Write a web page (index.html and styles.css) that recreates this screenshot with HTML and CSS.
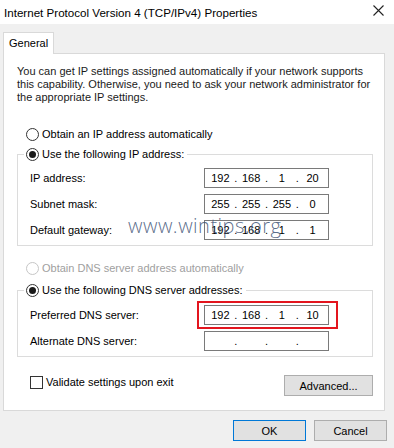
FILE: index.html
```html
<!DOCTYPE html>
<html lang="en">
<head>
    <meta charset="UTF-8">
    <title>Internet Protocol Version 4 (TCP/IPv4) Properties</title>
    <link rel="stylesheet" href="styles.css">
</head>
<body>
    <div class="window">
        <div class="titlebar">
            <span class="title">Internet Protocol Version 4 (TCP/IPv4) Properties</span>
            <svg class="close" width="11" height="11" viewBox="0 0 11 11">
                <path d="M0.5 0.5 L10.5 10.5 M10.5 0.5 L0.5 10.5" stroke="#222" stroke-width="1.1" fill="none"/>
            </svg>
        </div>

        <div class="content">
            <div class="tabs"><span class="tab">General</span></div>

            <div class="panel">
                <p class="intro">You can get IP settings assigned automatically if your network supports this capability. Otherwise, you need to ask your network administrator for the appropriate IP settings.</p>

                <div class="option first"><span class="radio"></span>Obtain an IP address automatically</div>

                <fieldset class="group">
                    <legend class="option"><span class="radio checked"></span>Use the following IP address:</legend>
                    <div class="row">
                        <span>IP address:</span>
                        <div class="ip"><span>192</span><i>.</i><span>168</span><i>.</i><span>1</span><i>.</i><span>20</span></div>
                    </div>
                    <div class="row">
                        <span>Subnet mask:</span>
                        <div class="ip"><span>255</span><i>.</i><span>255</span><i>.</i><span>255</span><i>.</i><span>0</span></div>
                    </div>
                    <div class="row">
                        <span>Default gateway:</span>
                        <div class="ip"><span>192</span><i>.</i><span>168</span><i>.</i><span>1</span><i>.</i><span>1</span></div>
                    </div>
                </fieldset>

                <div class="option disabled"><span class="radio"></span>Obtain DNS server address automatically</div>

                <fieldset class="group dns">
                    <legend class="option"><span class="radio checked"></span>Use the following DNS server addresses:</legend>
                    <div class="row">
                        <span>Preferred DNS server:</span>
                        <div class="ip marked"><span>192</span><i>.</i><span>168</span><i>.</i><span>1</span><i>.</i><span>10</span></div>
                    </div>
                    <div class="row">
                        <span>Alternate DNS server:</span>
                        <div class="ip"><span></span><i>.</i><span></span><i>.</i><span></span><i>.</i><span></span></div>
                    </div>
                </fieldset>

                <div class="panel-footer">
                    <div class="option"><span class="checkbox"></span>Validate settings upon exit</div>
                    <button class="btn advanced">Advanced...</button>
                </div>
            </div>

            <div class="actions">
                <button class="btn primary">OK</button>
                <button class="btn">Cancel</button>
            </div>
        </div>

        <div class="watermark">www.wintips.org</div>
    </div>
</body>
</html>
```

FILE: styles.css
```css
body {
    margin: 0;
    background-color: #f0f0f0;
    font-family: "Liberation Sans", Arial, sans-serif;
    font-size: 11px;
    color: #000;
}
.window {
    position: relative;
    width: 394px;
    height: 448px;
}
.titlebar {
    height: 24px;
    background-color: #fff;
    display: flex;
    align-items: center;
    padding: 0 10px 0 4px;
}
.title {
    font-size: 11.6px;
    color: #000;
}
.close {
    margin-left: auto;
    margin-top: -3px;
}
.content {
    padding: 8px 9px 0 3px;
}
.tabs {
    display: flex;
}
.tab {
    position: relative;
    width: 44px;
    height: 21px;
    line-height: 20px;
    padding-left: 5px;
    background-color: #fff;
    border: 1px solid #d9d9d9;
    border-bottom: 0;
    margin-bottom: -1px;
}
.panel {
    box-sizing: border-box;
    height: 358px;
    background-color: #fff;
    border: 1px solid #d9d9d9;
    padding: 0 11px 0 13px;
}
.intro {
    margin: 11px 0 0;
    line-height: 13px;
    color: #1a1a1a;
}
.option {
    display: flex;
    align-items: center;
    gap: 3px;
    height: 13px;
    line-height: 13px;
}
.option.first {
    margin: 24px 0 0 9px;
}
.option.disabled {
    margin: 16px 0 0 9px;
    color: #a0a0a0;
}
.radio {
    box-sizing: border-box;
    width: 13px;
    height: 13px;
    border: 1px solid #333;
    border-radius: 50%;
    display: flex;
    align-items: center;
    justify-content: center;
    background-color: #fff;
}
.radio.checked::after {
    content: "";
    width: 7px;
    height: 7px;
    border-radius: 50%;
    background-color: #1a1a1a;
}
.option.disabled .radio {
    border-color: #c6c6c6;
}
.checkbox {
    box-sizing: border-box;
    width: 13px;
    height: 13px;
    border: 1px solid #333;
    background-color: #fff;
}
.group {
    margin: 7px 0 0;
    border: 1px solid #dcdcdc;
    padding: 7px 11px 5px 12px;
    display: flex;
    flex-direction: column;
    gap: 6px;
}
.group.dns {
    margin-top: 9px;
    padding-top: 8px;
}
.group legend {
    padding: 0 3px 0 2px;
    margin-left: -6px;
}
.row {
    display: grid;
    grid-template-columns: 174px 125px;
    align-items: center;
}
.ip {
    position: relative;
    box-sizing: border-box;
    height: 20px;
    border: 1px solid #7a7a7a;
    display: flex;
    align-items: center;
    padding: 0 2px;
    background-color: #fff;
}
.ip span {
    flex: 1;
    text-align: center;
}
.ip i {
    font-style: normal;
    width: 4px;
    text-align: center;
}
.ip.marked::after {
    content: "";
    position: absolute;
    left: -8px;
    right: -10px;
    top: -5px;
    bottom: -5px;
    border: 2px solid #e3151e;
}
.panel-footer {
    display: flex;
    justify-content: space-between;
    align-items: flex-start;
    margin-top: 18px;
}
.panel-footer .option {
    margin: 1px 0 0 13px;
}
.btn {
    box-sizing: border-box;
    font-family: inherit;
    font-size: 11px;
    color: #000;
    background-color: #e1e1e1;
    border: 1px solid #adadad;
    padding: 0;
    height: 21px;
}
.btn.advanced {
    width: 89px;
}
.actions {
    display: flex;
    justify-content: flex-end;
    gap: 8px;
    margin: 9px -2px 0 0;
}
.actions .btn {
    width: 73px;
}
.btn.primary {
    border-color: #0078d7;
}
.watermark {
    position: absolute;
    left: 128px;
    top: 212px;
    font-family: "Open Sans", sans-serif;
    font-weight: 300;
    font-size: 20px;
    letter-spacing: 0.5px;
    color: rgba(62, 84, 118, 0.85);
}
```
